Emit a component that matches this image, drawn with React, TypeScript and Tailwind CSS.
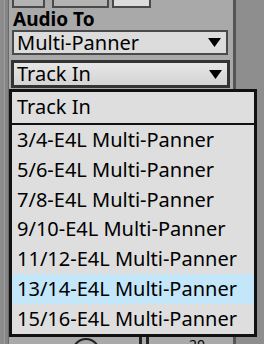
const font = { fontFamily: '"Noto Sans", "Open Sans", Arial, sans-serif' }

const items = [
  '3/4-E4L Multi-Panner',
  '5/6-E4L Multi-Panner',
  '7/8-E4L Multi-Panner',
  '9/10-E4L Multi-Panner',
  '11/12-E4L Multi-Panner',
  '13/14-E4L Multi-Panner',
  '15/16-E4L Multi-Panner',
]

const Arrow = () => (
  <svg width="13" height="9" viewBox="0 0 13 9" className="shrink-0">
    <path d="M0 0 H13 L6.5 9 Z" fill="#000" />
  </svg>
)

export default function App() {
  return (
    <div className="relative w-[264px] h-[344px] overflow-hidden bg-[#8e8e8e] flex text-black" style={font}>
      {/* left strip */}
      <div className="w-[9px] h-full flex">
        <div className="w-[4px] bg-[#8c8c8c]" />
        <div className="w-[1px] bg-[#9e9e9e]" />
        <div className="w-[3px] bg-[#858585]" />
        <div className="w-[1px] bg-[#6a6a6a]" />
      </div>

      {/* device panel */}
      <div className="w-[224px] h-full bg-[#a9a9a9] flex flex-col">
        <div className="h-[8px] flex">
          <div className="ml-[3px] w-[33px] h-full border-x-2 border-b-2 border-[#4a4a4a] bg-[#b3b3b3]" />
          <div className="ml-[7px] w-[57px] h-full border-x-2 border-b-2 border-[#4a4a4a] bg-[#b3b3b3]" />
          <div className="ml-[3px] w-[39px] h-full border-x-2 border-b-2 border-[#4a4a4a] bg-[#dcdcdc]" />
        </div>
        <div className="pl-[4px] h-[22px] flex items-center font-bold text-[19px] leading-none">Audio To</div>
        <div className="ml-[3px] w-[216px] h-[25px] border-2 border-[#4a4a4a] bg-[#dcdcdc] flex items-center justify-between pl-[3px] pr-[5px] text-[20px] leading-none">
          <span>Multi-Panner</span>
          <Arrow />
        </div>
        <div className="mt-[5px] ml-[2px] w-[219px] h-[28px] border-[3px] border-[#333] bg-gradient-to-b from-[#e6e6e6] to-[#d4d4d4] flex items-center justify-between pl-[3px] pr-[5px] text-[20px] leading-none">
          <span>Track In</span>
          <Arrow />
        </div>
        <div className="flex-1" />
        <div className="h-[7px] relative">
          <div className="absolute left-[63px] top-[1px] w-[28px] h-[28px] rounded-full border-2 border-[#222]" />
          <div className="absolute left-[130px] top-0 w-[3px] h-full bg-[#222]" />
          <div className="absolute left-[137px] top-0 w-[3px] h-full bg-[#222]" />
          <div className="absolute left-[180px] top-[1px] text-[14px] leading-none">20</div>
        </div>
      </div>
      <div className="w-[3px] h-full bg-[#555]" />

      {/* popup menu */}
      <div className="absolute left-[9px] top-[89px] w-[248px] h-[248px] border-[3px] border-[#111] bg-[#dedede] flex flex-col text-[20px] leading-none">
        <div className="h-[31px] flex items-center pl-[5px]">Track In</div>
        <div className="h-[2px] bg-[#111]" />
        {items.map((t) => (
          <div
            key={t}
            className={`h-[30px] flex items-center pl-[5px] whitespace-nowrap ${t.startsWith('13/14') ? 'bg-[#c3e6f9]' : ''}`}
          >
            {t}
          </div>
        ))}
      </div>
    </div>
  )
}
